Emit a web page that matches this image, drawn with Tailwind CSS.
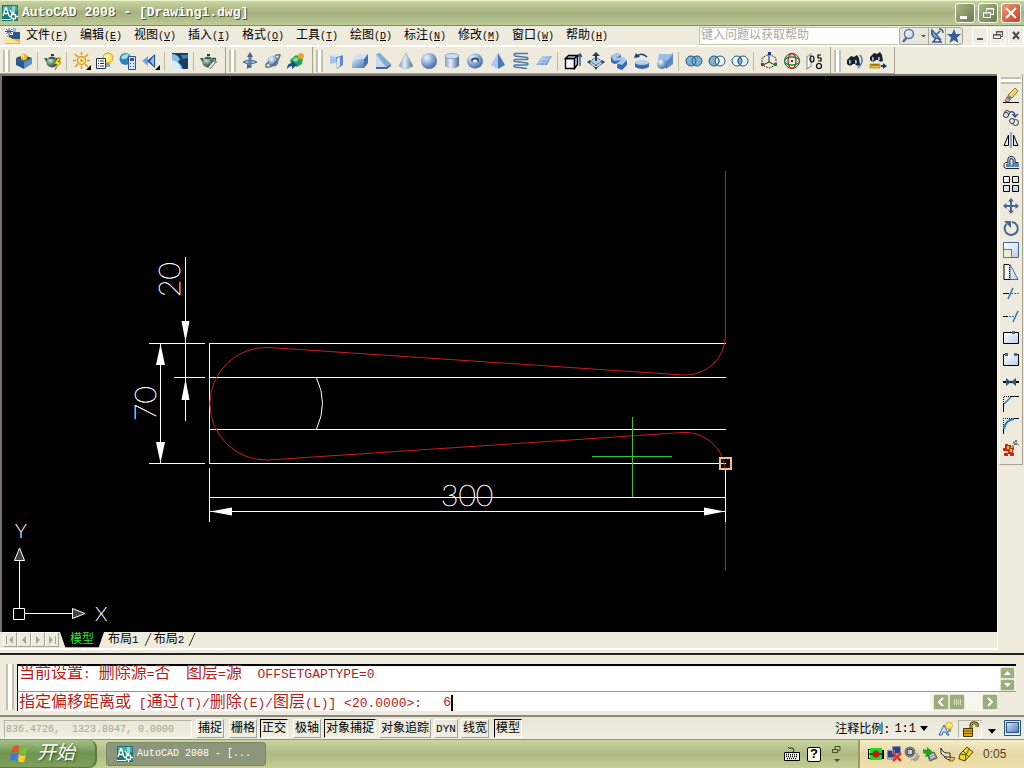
<!doctype html>
<html lang="zh-CN">

<head>
  <meta charset="utf-8">
  <meta name="viewport" content="width=device-width, initial-scale=1">
  <title>AutoCAD 2008 - [Drawing1.dwg]</title>
  <script src="https://cdn.jsdelivr.net/npm/@tailwindcss/browser@4"></script>
</head>

<body class="flex h-screen flex-col overflow-hidden bg-[#eeebdd] font-['Liberation_Mono','Noto_Sans_CJK_SC',monospace] text-[12px] leading-4 text-black">

<!-- shared gradients -->
<svg class="absolute size-0" aria-hidden="true">
  <defs>
    <linearGradient id="solid" x1="0" y1="0" x2="1" y2="1"><stop offset="0" stop-color="#dfeaf8"/><stop offset=".5" stop-color="#8fb0dc"/><stop offset="1" stop-color="#4f78b4"/></linearGradient>
    <linearGradient id="tube"><stop offset="0" stop-color="#7f9ec6"/><stop offset=".4" stop-color="#e6eef8"/><stop offset="1" stop-color="#4a6a9a"/></linearGradient>
    <radialGradient id="ball" cx=".35" cy=".3" r=".8"><stop offset="0" stop-color="#f2f7fd"/><stop offset=".5" stop-color="#86a8d6"/><stop offset="1" stop-color="#3b5c8e"/></radialGradient>
    <linearGradient id="pane" x1="0" y1="0" x2="1" y2="1"><stop offset="0" stop-color="#fff"/><stop offset="1" stop-color="#b9cdec"/></linearGradient>
    <radialGradient id="pot" cx=".35" cy=".3" r=".8"><stop offset="0" stop-color="#cfe2d6"/><stop offset=".5" stop-color="#5f8873"/><stop offset="1" stop-color="#20392c"/></radialGradient>
    <symbol id="acad" viewBox="0 0 16 16">
      <path fill="#157a78" d="M0 0h16v16H0z"/><path fill="#4aa8a3" d="M1 1h14v5H1z"/><path fill="#8fd2cc" d="M10 1h3v7h-3z"/>
      <path fill="none" stroke="#fff" stroke-width="1.300" d="M1 11 3.500 3h1L7 11M2 8.500h4.500M8 5l3 5M11.500 7v2M11.500 13v3M7 11.500h2M14 11.500h2"/><path fill="#157a78" stroke="#fff" stroke-width="1.300" d="M9.500 9.500h4v4h-4z"/><path fill="#fff" d="M0 14h9v1H0z"/>
    </symbol>
    <symbol id="teapot" viewBox="0 0 18 18">
      <path fill="none" stroke="#2f5140" stroke-width="1.500" d="M12 7q5-2 3 2l-3 3"/><path fill="#3d6450" d="M0 6h3l2 4-1 3z"/>
      <ellipse cx="8" cy="10.500" rx="5.500" ry="5" fill="url(#pot)"/><path fill="#3d6450" d="M4 6q4-3 8 0l-1 1H5z"/><path fill="#26402f" d="M7 2h3v2H7z"/>
    </symbol>
  </defs>
</svg>

<!-- title bar -->
<header class="flex h-[26px] shrink-0 items-center border-t border-b border-t-[#e9f2c9] border-b-[#7f8d5c] bg-linear-to-b from-[#c8d5a0] via-[#a5b17f] to-[#bdcc96] pr-[3px] pl-[2px]">
  <svg class="size-4"><use href="#acad"/></svg>
  <h1 class="ml-1 flex-1 text-[13px] font-bold text-white [text-shadow:1px_1px_#4c5832]">AutoCAD 2008 - [Drawing1.dwg]</h1>
  <div class="flex gap-[3px] [&_button]:size-[20px] [&_button]:rounded-[3px] [&_button]:border [&_button]:border-white">
    <button aria-label="最小化" class="bg-linear-to-br from-[#a9b78a] to-[#6b7d4b]"><svg viewBox="0 0 18 18"><path fill="#fff" d="M4 12h7v3H4z"/></svg></button>
    <button aria-label="还原" class="bg-linear-to-br from-[#a9b78a] to-[#6b7d4b]"><svg viewBox="0 0 18 18" fill="none" stroke="#fff"><path d="M7.500 7V4.500h7v6H12M7 5h8M4.500 8.500h7v5h-7zM4 9h8"/></svg></button>
    <button aria-label="关闭" class="bg-linear-to-br from-[#eb9a7c] to-[#c33b18]"><svg viewBox="0 0 18 18"><path stroke="#fff" stroke-width="2" d="m4 4 10 10M14 4 4 14"/></svg></button>
  </div>
</header>

<!-- menu bar -->
<div class="flex h-[19px] shrink-0 items-center">
  <svg class="ml-[5px] size-4" viewBox="0 0 16 16"><path fill="#9db7d8" d="M2 0h9l4 4v9H2z"/><path fill="#31558c" d="M4 4h11v8H4z"/><path fill="#e2eaf4" d="m11 0 4 4h-4z"/><path fill="#fff" d="M0 0h8v7H0z"/><path stroke="#31558c" d="M4 0v7M0 3.500h8M1 1l6 5M7 1 1 6"/><path fill="#f0b91e" d="M0 9h4l2 2h9v5H0z"/><path fill="#fbe48a" d="m0 8 4 1 11 6H0z"/></svg>
  <nav class="ml-[5px] flex pt-[2px] [&_button]:w-[54px] [&_button]:text-left [&_button]:whitespace-nowrap [&_span]:text-[10px]">
    <button>文件<span>(<u>F</u>)</span></button>
    <button>编辑<span>(<u>E</u>)</span></button>
    <button>视图<span>(<u>V</u>)</span></button>
    <button>插入<span>(<u>I</u>)</span></button>
    <button>格式<span>(<u>O</u>)</span></button>
    <button>工具<span>(<u>T</u>)</span></button>
    <button>绘图<span>(<u>D</u>)</span></button>
    <button>标注<span>(<u>N</u>)</span></button>
    <button>修改<span>(<u>M</u>)</span></button>
    <button>窗口<span>(<u>W</u>)</span></button>
    <button>帮助<span>(<u>H</u>)</span></button>
  </nav>
  <input type="text" aria-label="帮助搜索" placeholder="键入问题以获取帮助" class="ml-auto h-[18px] w-[200px] border border-[#bccb9e] border-r-white bg-white px-px pt-px text-[12px] placeholder:text-[#a9a89c]">
  <div class="flex h-[18px] w-[64px] rounded-[3px] border border-[#a9a795] bg-[#e6e7dd]">
    <button aria-label="搜索" class="w-[29px] border-r border-[#a9a795]"><svg viewBox="0 0 28 16"><path stroke="#6b6480" stroke-width="2.500" d="m7 9-4 5"/><circle cx="9" cy="6" r="4.500" fill="url(#pane)" stroke="#5a76a8" stroke-width="1.500"/><path fill="#6b4a30" d="M21 7h5l-2.500 2.500z"/></svg></button>
    <button aria-label="通讯中心" class="w-[17px] border-r border-[#a9a795]"><svg viewBox="0 0 16 16" fill="none" stroke="#3a5a94"><path fill="#9fb6da" stroke-width="1.500" d="M3 2q-2 8 8 9z"/><path stroke-width="1.500" d="m7 7 4-4M10 1q4 0 4 4M7 10l-3 4h8l-2-3"/></svg></button>
    <button aria-label="收藏夹" class="w-[16px]"><svg viewBox="0 0 16 16"><path fill="#3a5a94" d="m8 1 2 5h5l-4 3.500 1.500 5.500L8 12l-4.500 3L5 9.500 1 6h5z"/></svg></button>
  </div>
  <div class="ml-[9px] flex gap-[2px] [&_button]:h-[17px] [&_button]:w-4 [&_button]:border [&_button]:border-white [&_button]:bg-[#efede3]">
    <button aria-label="最小化文档"><svg viewBox="0 0 14 15"><path fill="#555" d="M4 10h6v2H4z"/></svg></button>
    <button aria-label="还原文档"><svg viewBox="0 0 14 15" fill="none" stroke="#555"><path d="M5.500 6V3.500h6v5H10M5 4h7M2.500 6.500h7v4h-7zM2 7h8"/></svg></button>
    <button aria-label="关闭文档"><svg viewBox="0 0 14 15"><path stroke="#444" stroke-width="2" d="m4 4 6 7M10 4l-6 7"/></svg></button>
  </div>
</div>

<!-- toolbars -->
<div class="flex h-[29px] shrink-0 border-t-2 border-white [&_button]:grid [&_button]:h-[23px] [&_button]:w-[23px] [&_button]:place-items-center [&_hr]:mx-[2px] [&_hr]:h-[19px] [&_hr]:w-[2px] [&_hr]:border-0 [&_hr]:border-l [&_hr]:border-[#bdb9a5] [&_i]:mr-[2px] [&_i]:ml-[3px] [&_i]:h-[22px] [&_i]:w-[7px] [&_i]:border-x-2 [&_i]:border-[#c4c0ae] [&_i]:bg-white [&_svg]:size-[18px] [&>div]:flex [&>div]:items-center [&>div]:border-r [&>div]:border-b [&>div]:border-[#a5a291] [&>div]:pt-[2px]">
  <div role="toolbar" class="w-[226px]">
    <i></i>
    <button aria-label="隐藏"><svg viewBox="0 0 18 18"><path fill="#2d5a8c" d="m1 6 8 4v7l-8-4z"/><path fill="#5f93c8" d="m9 10 8-4v6l-8 5z"/><path fill="#1f3f66" d="m1 6 7-3 9 3-8 4z"/><circle cx="9" cy="5" r="3.500" fill="#e8b923"/><circle cx="8" cy="4" r="1.500" fill="#fff0a0"/></svg></button>
    <hr>
    <button aria-label="渲染"><svg viewBox="0 0 18 18"><use href="#teapot"/><path fill="#ffe11c" stroke="#6b5200" stroke-width=".5" d="m14 6-4 6h3l-2 6 6-8h-3l3-4z"/></svg></button>
    <hr>
    <button aria-label="光源"><svg viewBox="0 0 18 18" fill="none" stroke="#e39a1b" stroke-width="1.500"><circle cx="8.500" cy="8.500" r="4" fill="#fff0b0"/><path d="M8.500 0v3M8.500 14v3M0 8.500h3M14 8.500h3M2 2l3 3M15 2l-3 3M2 15l3-3M12 12l3 3M8.500 7v3M7 8.500h3"/><path fill="#000" stroke="none" d="M18 13v5h-5z"/></svg></button>
    <button aria-label="光源列表"><svg viewBox="0 0 18 18"><circle cx="12" cy="6" r="5" fill="#ffe566" stroke="#c9a52a"/><circle cx="11" cy="5" r="2" fill="#fffbd8"/><path fill="#8ba0b8" d="M10 11h4v4h-4z"/><path fill="#fff" stroke="#22344e" d="M.5 6.500h9v10h-9z"/><path stroke="#22344e" d="M2 9h1M4 9h4M2 11.500h1M4 11.500h4M2 14h1M4 14h4"/></svg></button>
    <button aria-label="材质"><svg viewBox="0 0 18 18"><circle cx="6.500" cy="7" r="6" fill="#2c83c4"/><path fill="#a5dbe8" d="M2 5q4-5 8-2L7 7H3z"/><path fill="#d8e8fa" stroke="#31558c" d="M9.500 4.500h7v13h-7z"/><path fill="#31558c" d="M11 6h4v3h-4zM11 11h1v1h-1zM14 11h1v1h-1zM11 14h1v1h-1zM14 14h1v1h-1z"/></svg></button>
    <button aria-label="平面贴图"><svg viewBox="0 0 18 18"><path fill="#78a6dc" d="m0 9 6-5v10z"/><path fill="#234f96" d="m5 9 8-7v14z"/><path fill="#9dc0ea" d="m8 9 4-5v10z"/><path fill="#c4d8f0" d="m13 4 1-1v12l-1-1z"/><path fill="#000" d="M18 13v5h-5z"/></svg></button>
    <hr>
    <button aria-label="渲染环境"><svg viewBox="0 0 18 18"><path fill="#173f66" d="M1 1h16v16H1z"/><path fill="#87bfe4" d="M1 2q5 0 8 5l-2 3q3 2 5 7H9Q6 9 1 8z"/><path fill="#d9edf8" d="M1 8q7 1 9 9H1z"/><path fill="#3f7fb0" d="M10 3h7v3l-5 1z"/></svg></button>
    <hr>
    <button aria-label="高级渲染设置"><svg viewBox="0 0 18 18"><use href="#teapot"/><path stroke="#333" stroke-width="3.500" d="m9 16 5-6"/><path stroke="#eee" stroke-width="2" d="m9 16 6-7"/><path fill="none" stroke="#555" d="M13 7q0 4 4 3"/></svg></button>
  </div>
  <div role="toolbar" class="w-[87px]">
    <i></i>
    <button aria-label="受约束的动态观察"><svg viewBox="0 0 18 18" fill="none" stroke="#42648c"><path fill="#9fb8d8" d="M2 10q7-4 14 0-7 4-14 0z"/><path stroke="#5f7fa8" stroke-width="3" d="M9 3v13"/><path fill="#42648c" stroke="none" d="m9 0 3 5H6zM6 12l4 2-4 3z"/></svg></button>
    <button aria-label="自由动态观察"><svg viewBox="0 0 18 18" fill="none"><circle cx="9" cy="9" r="5.500" fill="url(#ball)"/><path stroke="#66707a" stroke-width="1.500" d="M2 15q-1-3 3-5M6 14q8-3 10-11-3-1-5 1M2 15q3 1 6-1"/></svg></button>
    <button aria-label="连续动态观察"><svg viewBox="0 0 18 18"><path fill="#28a05c" d="m3 8 6-5 7 3-1 6-5 3-6-3z"/><path fill="#7edca0" d="m5 8 4-3 3 2-3 3z"/><circle cx="14" cy="4" r="3" fill="#e8a823"/><path fill="#1b4f86" d="M0 17q0-6 5-6V8l5 5-5 4v-3q-3 0-5 3z"/></svg></button>
  </div>
  <div role="toolbar" class="w-[518px]">
    <i></i>
    <button aria-label="多段体"><svg viewBox="0 0 18 18"><path fill="#a9c4ea" d="m2 4 6-1v8l-6 1z"/><path fill="#5f8ac4" d="m8 5 7-2v10l-6 4z"/><path fill="#d9e6f6" d="m9 6 3-1v9l-3 2zM2 4l7-2 6 1-7 2z"/></svg></button>
    <button aria-label="长方体"><svg viewBox="0 0 18 18"><path fill="#d3e1f4" d="m1 7 5-5h11l-4 5z"/><path fill="url(#solid)" d="M1 7h12v9H1z"/><path fill="#4870aa" d="m13 7 4-5v9l-4 5z"/></svg></button>
    <button aria-label="楔体"><svg viewBox="0 0 18 18"><path fill="#c7d8ef" d="M2 2v13h10z"/><path fill="#88a9d4" d="m2 2 4-1 11 11-5 3z"/><path fill="#44679a" d="M2 15h10l5-3v2l-4 3H2z"/></svg></button>
    <button aria-label="圆锥体"><svg viewBox="0 0 18 18"><path fill="url(#tube)" stroke="#8a9bb0" stroke-width=".5" d="M9 1 2 14q7 5 14 0z"/></svg></button>
    <button aria-label="球体"><svg viewBox="0 0 18 18"><circle cx="9" cy="9" r="8" fill="url(#ball)"/></svg></button>
    <button aria-label="圆柱体"><svg viewBox="0 0 18 18"><path fill="url(#tube)" d="M2 4h14v10q-7 5-14 0z"/><ellipse cx="9" cy="4" rx="7" ry="2.500" fill="#cfdef2" stroke="#7091c0" stroke-width=".7"/></svg></button>
    <button aria-label="圆环体"><svg viewBox="0 0 18 18"><ellipse cx="9" cy="9" rx="8" ry="7.500" fill="url(#ball)"/><ellipse cx="9" cy="8" rx="4" ry="2.500" fill="#2f527f"/><ellipse cx="9" cy="9" rx="2.500" ry="1.500" fill="#eef4fb"/></svg></button>
    <button aria-label="棱锥体"><svg viewBox="0 0 18 18"><path fill="#a9c6ee" d="m9 1-7 12 7 4z"/><path fill="#4878ba" d="m9 1 7 12-7 4z"/></svg></button>
    <button aria-label="螺旋"><svg viewBox="0 0 18 18" fill="none" stroke="#4a78ac" stroke-width="1.500"><path d="M16 1.500H3q-2 1 0 2.500l12 1.500q2 1 0 2H3q-2 1 0 2L15 11q2 1 0 2H3q-2 1 0 2l12 1.500"/></svg></button>
    <button aria-label="平面曲面"><svg viewBox="0 0 18 18"><path fill="url(#solid)" d="M7 4h10l-5 9H1z"/><path stroke="#dfeafa" stroke-width=".4" d="m5 7 10 1M3 10l10 1M10 4l-5 9M14 4l-5 9"/></svg></button>
    <hr>
    <button aria-label="拉伸"><svg viewBox="0 0 18 18" fill="none" stroke="#000" stroke-width="1.300"><path fill="#f2f6fc" d="M1.500 6.500h9v10h-9z"/><path fill="#a9c0e2" d="m1.500 6.500 3-3h9l-3 3zM10.500 6.500l3-3v9l-3 4z"/><path stroke="#1f4a86" d="M16 14V2M14 5l2-3 2 3"/></svg></button>
    <button aria-label="按住并拖动"><svg viewBox="0 0 18 18"><path fill="#b9cbe3" stroke="#22344e" stroke-dasharray="1 1" d="m9 5 6 4v3l-6 4-6-4V9z"/><path fill="none" stroke="#22344e" stroke-dasharray="1 1" d="m3 9 6 4 6-4M9 13v4"/><path fill="#1c3c68" d="m9 0 4 4h-3v5H8V4H5zM0 10l3-2v4zM18 10l-3-2v4zM9 18l-2-3h4z"/></svg></button>
    <button aria-label="扫掠"><svg viewBox="0 0 18 18"><path fill="#3c6cae" d="m1 4 6-3 4 2v4l-3 1 5-1 4 2v4l-5 5-5-2v-3l3-2-6 1-3-2z"/><path fill="#a9c6ec" d="m1 4 6-3 4 2-5 3 7-1 4 3-5 5-5-2 4-3-7 1z"/></svg></button>
    <button aria-label="旋转"><svg viewBox="0 0 18 18"><path fill="#3c6cae" d="M2 10q7-3 14 0v5q-7 4-14 0z"/><ellipse cx="9" cy="10.500" rx="7" ry="2.500" fill="#b9d0ee"/><path fill="none" stroke="#1d3f70" stroke-width="1.500" d="M4 4q5-4 10 1"/><path fill="#1d3f70" d="m1 6 2-5 4 4z"/></svg></button>
    <button aria-label="放样"><svg viewBox="0 0 18 18"><path fill="#5a87c6" d="M8 6 17 1v11l-7 5z"/><path fill="#9cbce6" d="M3 2h14l-6 7-9 1z"/><circle cx="6" cy="12" r="5" fill="url(#ball)"/></svg></button>
    <hr>
    <button aria-label="并集"><svg viewBox="0 0 18 18" fill="#7fb0d0" stroke="#1f5680"><circle cx="6" cy="9" r="5"/><circle cx="12" cy="9" r="5"/><path fill="none" d="M9 5q4 4 0 8"/></svg></button>
    <button aria-label="差集"><svg viewBox="0 0 18 18" stroke="#1f5680"><circle cx="12" cy="9" r="5" fill="#eef3f6"/><circle cx="6" cy="9" r="5" fill="#7fb0d0"/><path fill="#eef3f6" d="M9 5q4 4 0 8-4-4 0-8z"/></svg></button>
    <button aria-label="交集"><svg viewBox="0 0 18 18" fill="#eef3f6" stroke="#1f5680"><circle cx="6" cy="9" r="5"/><circle cx="12" cy="9" r="5"/><path fill="#7fb0d0" d="M9 5q4 4 0 8-4-4 0-8z"/></svg></button>
    <hr>
    <button aria-label="三维移动"><svg viewBox="0 0 18 18" fill="none"><path stroke="#333" stroke-dasharray="2 1" d="m9 2 7 4v7l-7 3-7-3V6z"/><path stroke="#222" d="M9 2v8l-6 3M9 10l6 3"/><path fill="#1238a8" d="M8 0h3v3H8z"/><path fill="#c01818" d="M1 11h3v3H1z"/><path fill="#0c8a2c" d="M14 11h3v3h-3z"/></svg></button>
    <button aria-label="三维旋转"><svg viewBox="0 0 18 18" fill="none"><circle cx="9" cy="9" r="7.500" stroke="#42484e"/><ellipse cx="9" cy="9" rx="4" ry="7.500" stroke="#c81818" stroke-width="1.300"/><ellipse cx="9" cy="9" rx="7.500" ry="4" stroke="#198a3c" stroke-width="1.300"/><path fill="#1c3c68" d="M8 8h2v2H8z"/></svg></button>
    <button aria-label="三维对齐"><svg viewBox="0 0 18 18" fill="none" stroke="#000" stroke-width="1.200"><path fill="#fff" stroke="#999" d="m1 5 4-3v12l-4 3z"/><ellipse cx="6" cy="7" rx="2" ry="3"/><path d="M15 3h-3v3h3v3h-3"/><circle cx="13" cy="14" r="2.500"/></svg></button>
  </div>
  <div role="toolbar" class="w-[64px]">
    <i></i>
    <button aria-label="漫游"><svg viewBox="0 0 18 18"><path fill="#17222e" d="m1 8 4-4 3 1 3-2 2 3 1 7q-3 2-5-1H7q-3 3-6 0z"/><path fill="#a4b4c6" d="M3 8q2-1 2 3l-2 1zM9 8q2-1 2 3l-2 1z"/><path fill="none" stroke="#4978ac" stroke-width="1.500" d="M14 3q5 6-2 13"/></svg></button>
    <button aria-label="漫游设置"><svg viewBox="0 0 18 18"><path fill="#17222e" d="m1 5 4-4 3 1 3-2 2 3 1 6q-3 2-5-1H7q-3 3-6 0z"/><path fill="#a4b4c6" d="M3 5q2-1 2 3l-2 1zM9 5q2-1 2 3l-2 1z"/><path fill="#f0bd2c" stroke="#6a4c00" stroke-width=".5" d="M1 12h10v4H1z"/><path stroke="#6a4c00" d="M3 12v2M5 12v2M7 12v2M9 12v2"/><path fill="#15396c" d="M12 13h2v-2l4 3-4 3v-2h-2z"/></svg></button>
  </div>
</div>

<main class="flex min-h-0 flex-1">
  <section class="flex min-w-0 flex-1 flex-col border-b-2 border-white">
    <!-- model space -->
    <div class="min-h-0 flex-1 border-t-2 border-l-2 border-[#77736a] bg-black">
      <svg class="block h-full w-full" viewBox="2 76 995 556" preserveAspectRatio="xMinYMin meet">
        <g fill="none" stroke="#fff" shape-rendering="crispEdges">
          <path d="M209 343.500h517M209 377.500h517M209 429.500h517M209 463.500h517M209 497.500h517M209.500 343v121"/>
          <!-- dimension lines -->
          <path d="M149 343.500h56M174 377.500h31M149 463.500h56M160.500 344v119M185.500 257v164M209.500 468v54M725.500 468v54M209 511.500h517"/>
        </g>
        <path fill="none" stroke="#fff" d="M316.500 378q12 25 0 51"/>
        <path fill="#fff" d="m160.500 344-4.500 21h9zM160.500 463l-4.500-21h9zM185.500 342l-4-21h8zM185.500 379l-4 21h8zM210 511.500l22-4v8zM725 511.500l-21-4v8z"/>
        <g fill="none" stroke="#cc1c1c">
          <path d="M725.500 335A40 40 0 0 1 683 375L269 347.500A56.300 56.300 0 1 0 268 460L683 432.500A40 40 0 0 1 725 468"/>
          <path shape-rendering="crispEdges" d="M725.500 171v165M725.500 522v48"/>
        </g>
        <g fill="#fff" stroke="#fff" stroke-width=".5" font-family="Lato" font-weight="100" font-size="30">
          <text x="441" y="506">300</text>
          <text transform="translate(180 297) rotate(-90)">20</text>
          <text transform="translate(156 421) rotate(-90)">70</text>
        </g>
        <!-- crosshair and object snap marker -->
        <path stroke="#2fc62f" shape-rendering="crispEdges" d="M592 456.500h80M632.500 417v80"/>
        <path fill="none" stroke="#f2bd8b" stroke-width="2" d="M720 458h11v11h-11z"/>
        <!-- UCS icon -->
        <g fill="none" stroke="#fff">
          <path d="M13.500 608.500h11v11h-11zM19.500 608v-48M25 613.500h47"/>
          <path fill="#444" d="m19.500 548-5 12.500h10zM85 613.500l-12.500-5v10z"/>
        </g>
        <g fill="#fff" font-family="Lato" font-weight="300" font-size="20">
          <text x="95" y="621">X</text>
          <text x="15" y="538">Y</text>
        </g>
      </svg>
    </div>
    <!-- layout tabs -->
    <div class="flex h-4 shrink-0 items-stretch pl-[3px]">
      <div class="flex [&_button]:h-[15px] [&_button]:w-[14px] [&_button]:border [&_button]:border-white [&_button]:border-r-[#a5a291] [&_button]:border-b-[#a5a291] [&_svg]:fill-[#a8a595]">
        <button aria-label="第一个"><svg viewBox="0 0 12 12"><path d="M2 2h1v8H2zM9 2v8L5 6z"/></svg></button>
        <button aria-label="上一个"><svg viewBox="0 0 12 12"><path d="M8 2v8L4 6z"/></svg></button>
        <button aria-label="下一个"><svg viewBox="0 0 12 12"><path d="m4 2 4 4-4 4z"/></svg></button>
        <button aria-label="最后一个"><svg viewBox="0 0 12 12"><path d="M9 2h1v8H9zM3 2l4 4-4 4z"/></svg></button>
      </div>
      <button class="ml-px w-[44px] bg-black text-[#2fe62f] [clip-path:polygon(0_0,100%_0,88%_95%,12%_95%)]">模型</button>
      <button class="ml-[4px]">布局<span class="text-[11px]">1</span></button>
      <svg class="ml-[5px] w-2" viewBox="0 0 8 16"><path stroke="#333" d="M7 1 1 14"/></svg>
      <button class="ml-[2px]">布局<span class="text-[11px]">2</span></button>
      <svg class="ml-[4px] w-2" viewBox="0 0 8 16"><path stroke="#333" d="M7 1 1 14"/></svg>
    </div>
  </section>

  <!-- modify toolbar -->
  <aside class="w-[27px] shrink-0 border-l border-white">
    <div role="toolbar" class="mx-px flex flex-col items-center border-r border-b border-l border-[#a5a291] border-l-white pb-[5px] [&_button]:grid [&_button]:h-[22px] [&_button]:w-[23px] [&_button]:place-items-center [&_svg]:size-4">
      <i class="mt-[3px] mb-px h-[7px] w-[20px] border-y-2 border-[#c4c0ae] bg-white"></i>
      <button aria-label="删除"><svg viewBox="0 0 16 16"><path stroke="#000" d="M0 14.500h16"/><path fill="#f4d45c" stroke="#5f5330" stroke-width=".7" d="m12 0 3 3-6 7-4-3z"/><path fill="#5b86c0" d="m5 7 4 3-2 2-3-3z"/><path fill="#e89a9a" stroke="#7c3434" stroke-width=".7" d="m4 9 3 3-2 2-3-1z"/></svg></button>
      <button aria-label="复制"><svg viewBox="0 0 16 16" fill="#e6eefa" stroke="#333"><circle cx="4" cy="3" r="2.500"/><circle cx="3" cy="5" r="2.500"/><circle cx="12.500" cy="12.500" r="3"/><circle cx="9" cy="11" r="2.500"/><path fill="none" stroke="#31558c" stroke-width="1.500" d="M7 2q5-1 5 4M9.500 4 12 7l3-3"/></svg></button>
      <button aria-label="镜像"><svg viewBox="0 0 16 16" fill="#dde8f8" stroke="#000"><path d="M5.500 3v10.500H1zM10.500 3v10.500H15z"/><path stroke="#2f66b0" d="M8 0v16"/></svg></button>
      <button aria-label="偏移"><svg viewBox="0 0 16 16" fill="none" stroke="#222"><path d="M16 14.500H3q-3-1-2-4 1-3 4-2-1-6 3-6 5 0 4 6h3"/><path stroke="#2f66b0" stroke-width="1.500" d="M16 12H4q-1-2 3-2-1-5 1-5.500 3 0 2 5.500h6"/></svg></button>
      <button aria-label="阵列"><svg viewBox="0 0 16 16" fill="url(#pane)" stroke="#000"><path d="M.5.500h6v6h-6zM9.500.500h6v6h-6zM.5 9.500h6v6h-6zM9.500 9.500h6v6h-6z"/></svg></button>
      <button aria-label="移动"><svg viewBox="0 0 16 16" fill="#46698f"><path d="m8 0 3 3.500H9V7h3.500V5L16 8l-3.500 3V9H9v3.500h2L8 16l-3-3.500h2V9H3.500v2L0 8l3.500-3v2H7V3.500H5z"/></svg></button>
      <button aria-label="旋转"><svg viewBox="0 0 16 16"><path fill="none" stroke="#46698f" stroke-width="2" d="M3.500 4A6.500 6.500 0 1 0 9 2"/><path fill="#46698f" d="M1 1h7v7z"/></svg></button>
      <button aria-label="缩放"><svg viewBox="0 0 16 16"><path fill="url(#pane)" stroke="#44658f" d="M.5.500h15v15H.5z"/><path fill="#eeebdd" d="M0 7h9v9H0z"/><path fill="none" stroke="#000" stroke-dasharray="1 1" d="M.5 7.500h8v8h-8z"/></svg></button>
      <button aria-label="拉伸"><svg viewBox="0 0 16 16"><path fill="url(#pane)" stroke="#44658f" d="M7 .5 15 15.500H7z"/><path fill="#fff" stroke="#000" d="M6 .5H1v15h5"/><path stroke="#000" stroke-dasharray="1 1" d="M6.500 1v15"/></svg></button>
      <button aria-label="修剪"><svg viewBox="0 0 16 16" stroke="#000"><path d="M0 7.500h6"/><path stroke="#2f76c0" stroke-dasharray="2 1" d="M8 7.500h8"/><path stroke="#2f76c0" stroke-width="1.500" d="M10 2 5 13"/></svg></button>
      <button aria-label="延伸"><svg viewBox="0 0 16 16" stroke="#000"><path d="M0 8.500h5"/><path stroke="#2f76c0" stroke-dasharray="2 1" d="M6 8.500h5"/><path stroke="#2f76c0" stroke-width="1.500" d="m15 3-5 11"/></svg></button>
      <button aria-label="打断于点"><svg viewBox="0 0 16 16"><path fill="url(#pane)" stroke="#000" d="M.5 2.500h15v11H.5z"/><path fill="#46698f" d="M9 1h3v3H9z"/></svg></button>
      <button aria-label="打断"><svg viewBox="0 0 16 16"><path fill="url(#pane)" d="M1 3h14v10H1z"/><path fill="none" stroke="#000" d="M3 2.500H.5v11h15v-11H13"/><path fill="#46698f" d="M2 1h3v3H2zM11 1h3v3h-3z"/></svg></button>
      <button aria-label="合并"><svg viewBox="0 0 16 16"><path stroke="#000" stroke-width="2" d="M0 8h16"/><path fill="#2f5374" d="m3 4 5 4-5 4zM13 4 8 8l5 4z"/></svg></button>
      <button aria-label="倒角"><svg viewBox="0 0 16 16" fill="none" stroke="#000"><path d="M8 .5h8M.5 8v8"/><path stroke-dasharray="1 1" d="M8 .5H.5V8"/><path stroke="#2f76c0" stroke-width="1.500" d="M8 1 1 8"/></svg></button>
      <button aria-label="圆角"><svg viewBox="0 0 16 16" fill="none" stroke="#000"><path d="M11 .5h5M.5 11v5"/><path stroke-dasharray="1 1" d="M11 .5H.5V11"/><path stroke="#2f76c0" stroke-width="2" d="M11 1Q2 2 1 11"/></svg></button>
      <button aria-label="分解"><svg viewBox="0 0 16 16"><path fill="#c22a17" d="M2 4h3v1h3v2h3v3h-1v3h1v3H7v-2H5v2H1v-3h1v-2H0V8h2z"/><path fill="#ffd02c" d="M4 6h2v3H4zM7 9h2v3H7zM2 11h3v2H2zM8 6h2v2H8z"/><path stroke="#777" stroke-width="2" stroke-dasharray="2 1" d="m9 7 4-4M10 2l6 3M13 0v6"/></svg></button>
    </div>
  </aside>
</main>

<!-- command line -->
<section class="mt-[3px] flex h-[64px] shrink-0 border-t-2 border-b-2 border-t-[#222] border-b-[#8b887b] pt-[9px] pr-[8px] pl-[6px] text-[#b51d1d] [&_span]:text-[13px]">
  <i class="mr-[3px] h-[46px] w-[8px] border-x-2 border-[#c4c0ae] bg-white"></i>
  <div class="min-w-0 flex-1">
    <div class="flex h-[28px] border-t-2 border-b border-l border-black border-b-[#9b988b] bg-white">
      <p class="min-w-0 flex-1 pl-px text-[16px] leading-4 whitespace-pre">当前设置<span>: </span>删除源<span>=</span>否<span>  </span>图层<span>=</span>源<span>  OFFSETGAPTYPE=0</span></p>
      <div class="flex w-4 flex-col justify-between bg-[#f5f4ec] py-px [&_button]:h-3 [&_button]:w-[15px] [&_button]:rounded-[2px] [&_button]:border [&_button]:border-[#dfe5cf] [&_button]:bg-[#9cae7e]">
        <button aria-label="向上滚动"><svg viewBox="0 0 13 10"><path fill="#fff" d="m6.500 3 3.500 4H3z"/></svg></button>
        <button aria-label="向下滚动"><svg viewBox="0 0 13 10"><path fill="#fff" d="m6.500 7 3.500-4H3z"/></svg></button>
      </div>
    </div>
    <div class="flex h-[19px] items-center border-l border-black">
      <div class="flex h-full min-w-0 flex-1 items-center bg-white pt-[3px] pl-px">
        <label for="command" class="text-[16px] leading-4 whitespace-pre">指定偏移距离或<span> [</span>通过<span>(T)/</span>删除<span>(E)/</span>图层<span>(L)] &lt;20.0000&gt;:</span></label>
        <input id="command" type="text" value="6" class="ml-[21px] h-4 w-2 text-[13px] outline-none">
        <b class="h-4 w-[2px] bg-black"></b>
      </div>
      <div class="mr-[18px] flex h-full w-[68px] items-center bg-[#f7f6ef] pl-[3px] [&_button]:h-4 [&_button]:w-4 [&_button]:rounded-[2px] [&_button]:border [&_button]:border-[#dfe5cf] [&_button]:bg-[#9cae7e]">
        <button aria-label="向左滚动"><svg viewBox="0 0 14 14"><path fill="none" stroke="#fff" stroke-width="2" d="M9 3 5 7l4 4"/></svg></button>
        <button aria-label="滑块"><svg viewBox="0 0 14 14"><path stroke="#d5e0bd" d="M4.500 4v6M6.500 4v6M8.500 4v6M10.500 4v6"/></svg></button>
        <button aria-label="向右滚动" class="ml-auto"><svg viewBox="0 0 14 14"><path fill="none" stroke="#fff" stroke-width="2" d="m5 3 4 4-4 4"/></svg></button>
      </div>
    </div>
  </div>
</section>

<!-- status bar -->
<footer class="flex h-[22px] shrink-0 items-center bg-linear-to-b from-[#e6e5d6] to-[#f1efe3] pt-px pr-[3px] pl-[4px]">
  <output class="h-[18px] w-[188px] border border-[#b5b2a0] border-r-white border-b-white pl-px text-[10px] leading-[18px] whitespace-pre text-[#a8a594]">836.4726,  1323.8047, 0.0000</output>
  <div class="ml-1 flex gap-[3px] [&_button]:h-[19px] [&_button]:border [&_button]:px-px [&_button]:leading-[18px] [&_button]:whitespace-nowrap">
    <button class="border-white border-r-[#a5a291] border-b-[#a5a291]">捕捉</button>
    <button class="ml-[2px] border-white border-r-[#a5a291] border-b-[#a5a291]">栅格</button>
    <button aria-pressed="true" class="border-black border-r-white border-b-white">正交</button>
    <button class="ml-[2px] border-white border-r-[#a5a291] border-b-[#a5a291]">极轴</button>
    <button aria-pressed="true" class="border-black border-r-white border-b-white">对象捕捉</button>
    <button class="border-white border-r-[#a5a291] border-b-[#a5a291]">对象追踪</button>
    <button class="border-white border-r-[#a5a291] border-b-[#a5a291] text-[11px]">DYN</button>
    <button class="border-white border-r-[#a5a291] border-b-[#a5a291]">线宽</button>
    <button aria-pressed="true" class="ml-[2px] border-black border-r-white border-b-white">模型</button>
  </div>
  <div class="ml-auto flex items-center">
    <span class="pt-[2px]">注释比例:</span>
    <button class="ml-1 flex items-center gap-1 text-[12px]">1:1 <svg class="w-2" viewBox="0 0 8 5"><path d="M0 0h8L4 5z"/></svg></button>
    <button aria-label="注释可见性" class="ml-[10px]"><svg class="size-4" viewBox="0 0 16 16"><circle cx="11" cy="4.500" r="3.500" fill="#ffe566" stroke="#c9a52a" stroke-width=".7"/><path fill="#8894a4" d="M10 8h3v3h-3z"/><path fill="#d6e5f6" stroke="#2f66a0" d="M6 4 1 14h3l1-3h3l1 3h2z"/></svg></button>
    <button aria-label="工具栏/窗口位置锁定" class="ml-[4px] h-[18px] w-[24px] border border-[#b5b2a0] border-r-white border-b-white pl-[3px]"><svg class="size-[17px]" viewBox="0 0 17 17"><path fill="none" stroke="#4b3c00" stroke-width="3" d="M9 8V4q1-3 4-2 3 0 2 4"/><path fill="none" stroke="#e5cf5c" d="M9 8V4q1-3 4-2 3 0 2 4"/><path fill="#dca91b" stroke="#4b3700" d="M1.500 7.500h9v8h-9z"/><path stroke="#745300" d="M2 10h9M2 12.500h9"/></svg></button>
    <button aria-label="状态栏菜单" class="ml-[6px] pt-[5px]"><svg class="w-2" viewBox="0 0 8 5"><path d="M0 0h8L4 5z"/></svg></button>
    <button aria-label="全屏显示" class="ml-[8px]"><svg class="size-[17px]" viewBox="0 0 17 17"><path fill="#dce8f8" stroke="#28507c" d="M.5.500h16v15H.5z"/><path fill="url(#solid)" stroke="#28507c" d="M2.500 2.500h12v10h-12z"/></svg></button>
  </div>
</footer>

<!-- taskbar -->
<div class="flex h-[29px] shrink-0 items-stretch border-t border-[#8f9d68] bg-linear-to-b from-[#c9d6a2] via-[#adb981] to-[#c3cf94]">
  <button class="flex w-[97px] items-center rounded-r-lg border-r-2 border-b border-[#5c7a3c] bg-linear-to-b from-[#a6c287] via-[#6f9450] to-[#7e9f5c] pl-[10px] text-[19px] leading-6 text-white italic [text-shadow:1px_1px_2px_#34491f]">
    <svg class="mr-[8px] size-[19px]" viewBox="0 0 19 19"><path fill="#e5532a" d="M3 3q3-3 6-1L8 9Q5 7 1 9z"/><path fill="#7cc034" d="M10 3q3 2 8 0l-2 7q-4 2-7-1z"/><path fill="#3f78dc" d="M1 10q4-2 7 0l-1 7q-4-2-7 0z"/><path fill="#f7cf2a" d="M9 10q3 3 7 1l-2 7q-3 1-6-1z"/></svg>开始
  </button>
  <button class="my-[2px] ml-[9px] flex w-[160px] items-center rounded-[3px] border border-[#7b8763] bg-[#8c967a] pl-[10px] whitespace-nowrap text-white">
    <svg class="mr-1 size-4"><use href="#acad"/></svg><span class="text-[10px]">AutoCAD 2008 - [...</span>
  </button>
  <div class="ml-auto flex items-center pr-[17px]">
    <button aria-label="键盘"><svg class="mr-[7px] size-4" viewBox="0 0 16 16"><path fill="none" stroke="#222" d="M4 1q1 2 3 1t3 2l-1 2"/><path fill="#fff" stroke="#000" d="M.5 6.500h15v8H.5z"/><path stroke="#000" stroke-width="1.500" stroke-dasharray="1 1" d="M2 8.500h12M2 10.500h12M3 12.500h10"/></svg></button>
    <button aria-label="帮助" class="mr-[11px] h-[15px] w-[14px] rounded-[2px] border border-black bg-[#fffde8] font-['Liberation_Sans'] text-[13px] leading-3 font-bold">?</button>
    <button aria-label="语言栏选项"><svg class="h-4 w-[9px]" viewBox="0 0 9 16" fill="none" stroke="#4a4f20"><path d="M3 3V.5h5v4H6M.5 3.500h5v3h-5z"/><path fill="#4a4f20" stroke="none" d="M2 13h6l-3 3z"/></svg></button>
  </div>
  <div class="flex w-[166px] items-center gap-[2px] border-l-2 border-[#9a9a64] bg-linear-to-b from-[#f2ecc4] via-[#e8d8a4] to-[#f0dfae] pl-[8px] [&_svg]:size-4">
    <svg viewBox="0 0 16 16"><path fill="#000" d="M0 3h3v1H1v8h2v1H0zM14 4h2v9h-2z"/><path fill="#19e019" d="M2 2h12v12H2z"/><path stroke="#000" d="M1 8h14"/><circle cx="8" cy="8" r="3.500" fill="#c91616"/></svg>
    <svg viewBox="0 0 16 16"><path fill="#2d3f86" stroke="#8791b8" d="M6.500.500h8v7h-8zM1.500 4.500h7v7h-7z"/><path fill="#a9aab8" d="M1 12h8v2H1z"/><path stroke="#e03424" stroke-width="2.500" d="m7 7 8 8M15 7l-8 8"/></svg>
    <svg viewBox="0 0 16 16" fill="none"><circle cx="6" cy="6" r="5.500" fill="#777c80"/><circle cx="6" cy="6" r="3" fill="#c6cacc" stroke="#3c3c3c"/><path stroke="#999" stroke-width="1.500" d="M7 14q7-1 6-7M10 15q5-2 5-6"/></svg>
    <svg viewBox="0 0 16 16"><path fill="#8d9298" stroke="#555" d="m5 8 7-2 3 6-7 3z"/><path fill="#23a12c" d="m1 3 4 1V1l5 4-2 5-5 1 1-3-3-1z"/><path stroke="#eee" d="m8 10 4-2M9 12l4-2"/></svg>
    <svg viewBox="0 0 16 16" fill="#fff" stroke="#222"><path d="M1 2v5q3 5 9 4l1 3-4-1-3-2M1 2q2 6 9 5v4"/><path fill="#e9c83c" stroke="#7b6510" d="m11 11 4 1-2 3h-4z"/></svg>
    <svg viewBox="0 0 16 16"><path fill="#ecd62c" stroke="#5a4d00" d="m9 1 6 5-8 9-6-2 1-5z"/><path fill="none" stroke="#5a4d00" d="m2 8 6 1-1 6M5 5l6 6M8 9l3-6"/></svg>
    <time class="ml-[7px] font-['Liberation_Sans'] text-[12px] text-[#4a4420]">0:05</time>
  </div>
</div>
</body>
</html>
